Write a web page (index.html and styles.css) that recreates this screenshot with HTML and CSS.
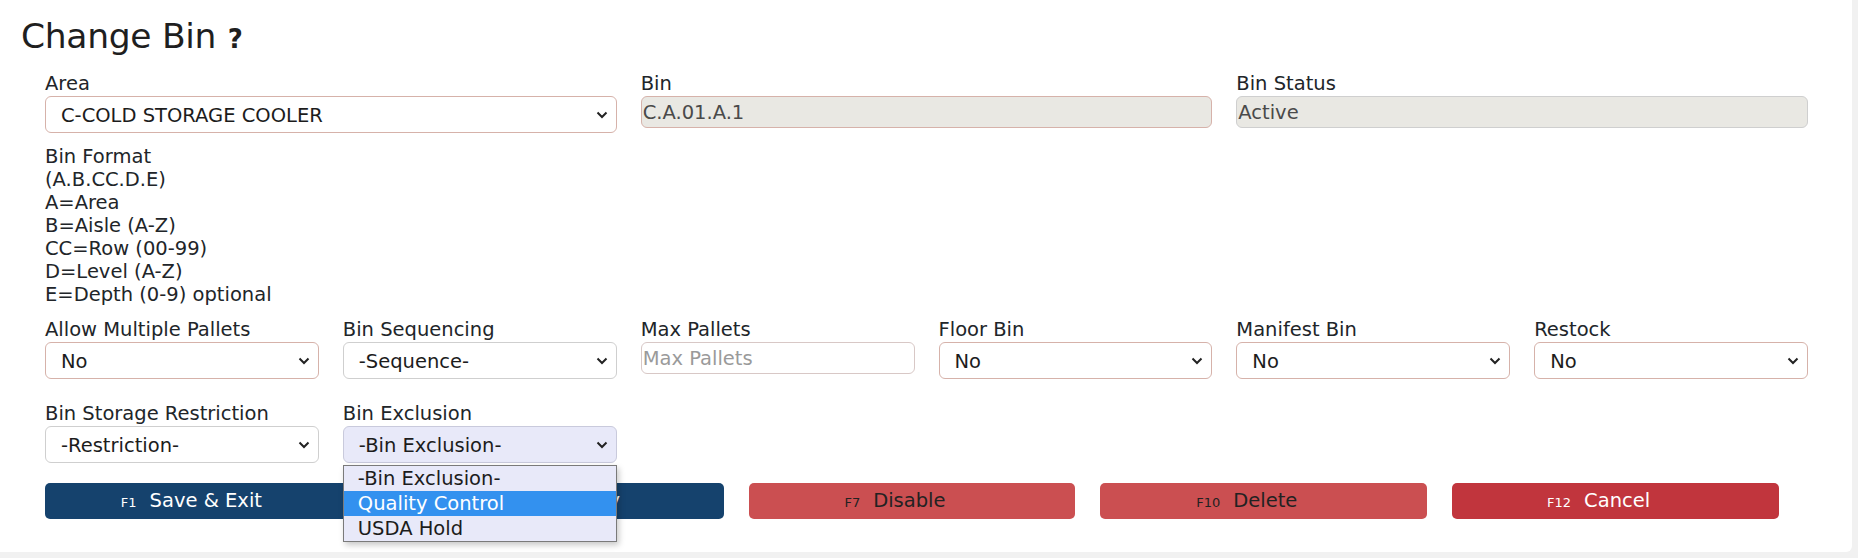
FILE: index.html
```html
<!DOCTYPE html>
<html lang="en">
<head>
<meta charset="utf-8">
<title>Change Bin</title>
<link rel="stylesheet" href="styles.css">
</head>
<body>
<div class="card">
  <h1 class="title">Change Bin <span class="help">?</span></h1>

  <div class="row row-top">
    <div class="field span2">
      <label class="lbl">Area</label>
      <div class="sel-wrap">
        <select class="sel req"><option>C-COLD STORAGE COOLER</option></select>
        <svg class="chev" width="12" height="8" viewBox="0 0 12 8"><path d="M1.5 1.5 L6 6 L10.5 1.5" fill="none" stroke="#222" stroke-width="2"/></svg>
      </div>
    </div>
    <div class="field span2">
      <label class="lbl">Bin</label>
      <input class="inp disabled req" value="C.A.01.A.1" disabled>
    </div>
    <div class="field span2">
      <label class="lbl">Bin Status</label>
      <input class="inp disabled" value="Active" disabled>
    </div>
  </div>

  <div class="format">
    <div>Bin Format</div>
    <div>(A.B.CC.D.E)</div>
    <div>A=Area</div>
    <div>B=Aisle (A-Z)</div>
    <div>CC=Row (00-99)</div>
    <div>D=Level (A-Z)</div>
    <div>E=Depth (0-9) optional</div>
  </div>

  <div class="row row-mid">
    <div class="field">
      <label class="lbl">Allow Multiple Pallets</label>
      <div class="sel-wrap">
        <select class="sel req"><option>No</option></select>
        <svg class="chev" width="12" height="8" viewBox="0 0 12 8"><path d="M1.5 1.5 L6 6 L10.5 1.5" fill="none" stroke="#222" stroke-width="2"/></svg>
      </div>
    </div>
    <div class="field">
      <label class="lbl">Bin Sequencing</label>
      <div class="sel-wrap">
        <select class="sel"><option>-Sequence-</option></select>
        <svg class="chev" width="12" height="8" viewBox="0 0 12 8"><path d="M1.5 1.5 L6 6 L10.5 1.5" fill="none" stroke="#222" stroke-width="2"/></svg>
      </div>
    </div>
    <div class="field">
      <label class="lbl">Max Pallets</label>
      <input class="inp plain" placeholder="Max Pallets">
    </div>
    <div class="field">
      <label class="lbl">Floor Bin</label>
      <div class="sel-wrap">
        <select class="sel req"><option>No</option></select>
        <svg class="chev" width="12" height="8" viewBox="0 0 12 8"><path d="M1.5 1.5 L6 6 L10.5 1.5" fill="none" stroke="#222" stroke-width="2"/></svg>
      </div>
    </div>
    <div class="field">
      <label class="lbl">Manifest Bin</label>
      <div class="sel-wrap">
        <select class="sel req"><option>No</option></select>
        <svg class="chev" width="12" height="8" viewBox="0 0 12 8"><path d="M1.5 1.5 L6 6 L10.5 1.5" fill="none" stroke="#222" stroke-width="2"/></svg>
      </div>
    </div>
    <div class="field">
      <label class="lbl">Restock</label>
      <div class="sel-wrap">
        <select class="sel req"><option>No</option></select>
        <svg class="chev" width="12" height="8" viewBox="0 0 12 8"><path d="M1.5 1.5 L6 6 L10.5 1.5" fill="none" stroke="#222" stroke-width="2"/></svg>
      </div>
    </div>
  </div>

  <div class="row row-low">
    <div class="field">
      <label class="lbl">Bin Storage Restriction</label>
      <div class="sel-wrap">
        <select class="sel"><option>-Restriction-</option></select>
        <svg class="chev" width="12" height="8" viewBox="0 0 12 8"><path d="M1.5 1.5 L6 6 L10.5 1.5" fill="none" stroke="#222" stroke-width="2"/></svg>
      </div>
    </div>
    <div class="field">
      <label class="lbl">Bin Exclusion</label>
      <div class="sel-wrap">
        <select class="sel focus"><option>-Bin Exclusion-</option></select>
        <svg class="chev" width="12" height="8" viewBox="0 0 12 8"><path d="M1.5 1.5 L6 6 L10.5 1.5" fill="none" stroke="#222" stroke-width="2"/></svg>
        <ul class="dropdown">
          <li>-Bin Exclusion-</li>
          <li class="hl">Quality Control</li>
          <li>USDA Hold</li>
        </ul>
      </div>
    </div>
  </div>

  <div class="actions">
    <button class="btn btn-blue"><span class="fk">F1</span>Save &amp; Exit</button>
    <button class="btn btn-blue"><span class="fk">F2</span>Save &amp; Copy</button>
    <button class="btn btn-soft"><span class="fk">F7</span>Disable</button>
    <button class="btn btn-soft"><span class="fk">F10</span>Delete</button>
    <button class="btn btn-red"><span class="fk">F12</span>Cancel</button>
  </div>
</div>
</body>
</html>
```

FILE: styles.css
```css
* { box-sizing: border-box; }

html, body {
  margin: 0;
  padding: 0;
  background: #f1f1f1;
}

body {
  font-family: "DejaVu Sans", "Open Sans", sans-serif;
  color: #212529;
  font-size: 19.5px;
}

.card {
  width: 1852px;
  height: 552px;
  background: #ffffff;
  border-bottom-right-radius: 6px;
}

.title {
  margin: 0;
  padding: 14px 0 0 21px;
  font-size: 34.5px;
  font-weight: 400;
  line-height: 44px;
  color: #1f1f1f;
  letter-spacing: -0.3px;
}

.help {
  font-size: 26px;
  font-weight: 700;
  margin-left: 1px;
}

.row {
  display: grid;
  grid-template-columns: repeat(6, 1fr);
  column-gap: 24px;
  padding: 0 44px 0 45px;
}

.row-top { margin-top: 11px; }
.row-mid { margin-top: 12px; }
.row-low { margin-top: 23px; }

.span2 { grid-column: span 2; }

.field {
  display: flex;
  flex-direction: column;
}

.lbl {
  display: block;
  line-height: 23px;
  height: 23px;
  margin-bottom: 1px;
  white-space: nowrap;
}

.sel-wrap {
  position: relative;
}

.sel {
  -webkit-appearance: none;
  appearance: none;
  display: block;
  width: 100%;
  height: 37px;
  margin: 0;
  padding: 2px 30px 0 15px;
  font-family: inherit;
  font-size: 19.5px;
  color: #1c1c1c;
  background: #ffffff;
  border: 1px solid #cfcfcf;
  border-radius: 6px;
  outline: none;
}

.sel.req { border-color: #d6b2aa; }

.sel.focus {
  background: #e8e9f9;
  border-color: #c9cadc;
}

.chev {
  position: absolute;
  right: 9px;
  top: 15px;
  pointer-events: none;
}

.inp {
  display: block;
  width: 100%;
  height: 32px;
  margin: 0;
  padding: 0 1px;
  font-family: inherit;
  font-size: 19.5px;
  border: 1px solid #cfcfcf;
  border-radius: 6px;
  outline: none;
  background: #ffffff;
}

.inp.disabled {
  background: #e9e8e3;
  color: #4a4a4a;
  -webkit-text-fill-color: #4a4a4a;
}

.inp.req { border-color: #d6b2aa; }

.inp.plain { border-color: #d8c8c6; }

.inp::placeholder { color: #9a9a9a; }

.format {
  margin-top: 12px;
  padding-left: 45px;
  line-height: 23px;
}

.dropdown {
  position: absolute;
  left: 0;
  top: 39px;
  width: 100%;
  margin: 0;
  padding: 0;
  list-style: none;
  background: #e8e9f9;
  border: 1px solid #7a7a7a;
  box-shadow: 2px 3px 6px rgba(0, 0, 0, 0.22);
  z-index: 5;
}

.dropdown li {
  height: 25px;
  line-height: 25px;
  padding-left: 14px;
  color: #1c1c1c;
  white-space: nowrap;
}

.dropdown li.hl {
  background: #3391ef;
  color: #ffffff;
}

.actions {
  display: grid;
  grid-template-columns: repeat(5, 1fr);
  column-gap: 25px;
  margin: 20px 73px 0 45px;
}

.btn {
  height: 36px;
  border: none;
  border-radius: 5px;
  font-family: inherit;
  font-size: 19.5px;
  display: flex;
  align-items: center;
  justify-content: center;
  padding: 0 34px 2px 0;
  cursor: pointer;
}

.fk {
  font-size: 13px;
  margin-right: 13px;
  margin-top: 4px;
}

.btn-blue {
  background: #15426d;
  color: #ffffff;
}

.btn-soft {
  background: #cb4f51;
  color: #222222;
}

.btn-red {
  background: #c1353d;
  color: #ffffff;
}
```
